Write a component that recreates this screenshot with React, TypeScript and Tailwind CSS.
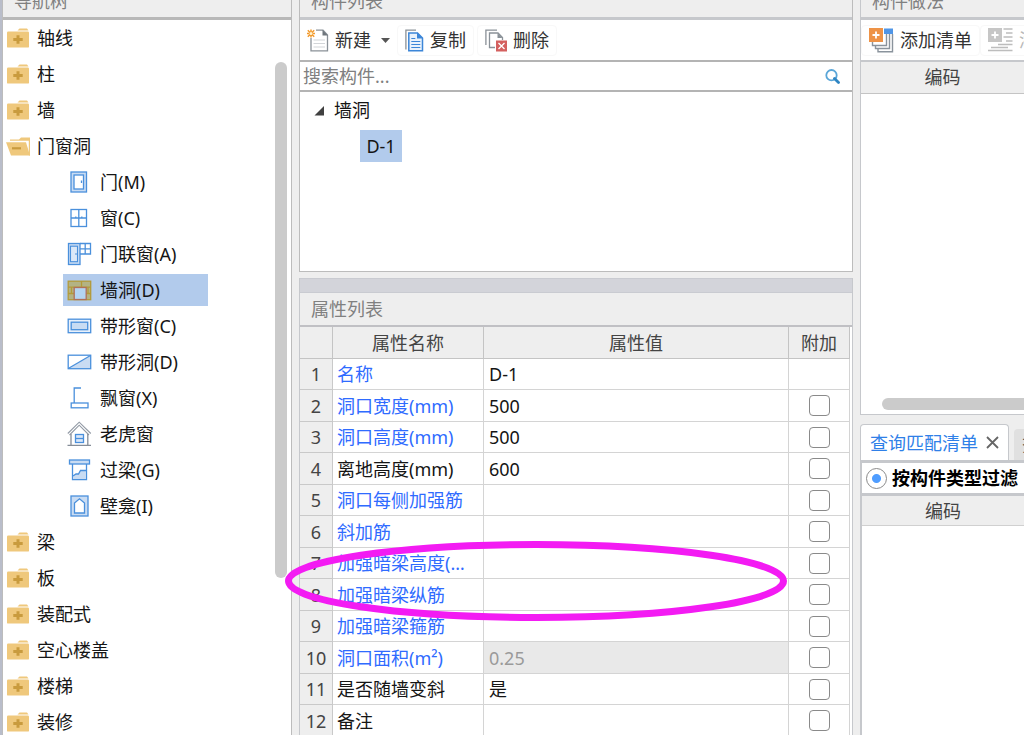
import type { ReactNode } from 'react'

const BLUE = '#4a90dc'
const PALE = '#c9dcf3'

const FolderClosed = () => (
  <svg width="22" height="20" viewBox="0 0 22 20" aria-hidden="true">
    <path d="M10.5 2.4L12.5 0.4H20L21.5 2.4z" fill="#efc87c" />
    <rect x="0" y="3.4" width="22" height="16.2" rx="1.2" fill="#efc87c" />
    <path d="M9.5 7.2h3v2.8h3.2v3h-3.2v2.8h-3V13H6.300v-3h3.200z" fill="#c99b3e" />
  </svg>
)

const FolderOpen = () => (
  <svg width="24" height="19" viewBox="0 0 24 19" aria-hidden="true">
    <path d="M4 3.800V2.400H13L15 0.600H24V18.400H22.800V3.800z" fill="#efc87c" />
    <path d="M0 5.200H20L24 18.400H5z" fill="#efc87c" />
    <path d="M6 10.200h9v2.200h-9z" fill="#c99b3e" />
  </svg>
)

const DoorIcon = () => (
  <svg width="25" height="24" viewBox="0 0 25 24" aria-hidden="true">
    <rect x="4" y="2" width="15.500" height="20" fill={PALE} stroke={BLUE} strokeWidth="1.300" />
    <rect x="7" y="5" width="9.500" height="14" fill="#fff" stroke={BLUE} strokeWidth="1.300" />
    <path d="M14.500 10.500v2.500" stroke={BLUE} strokeWidth="1.300" />
  </svg>
)

const WindowIcon = () => (
  <svg width="25" height="24" viewBox="0 0 25 24" aria-hidden="true">
    <rect x="4" y="3.500" width="15.500" height="17" fill="#fff" stroke={BLUE} strokeWidth="1.300" />
    <path d="M4 12h15.500M11.800 3.500v17M8.800 10.500v1.500M14.800 10.500v1.500" stroke={BLUE} strokeWidth="1.300" />
  </svg>
)

const DoorWindowIcon = () => (
  <svg width="25" height="24" viewBox="0 0 25 24" aria-hidden="true">
    <rect x="1.500" y="1.500" width="11.500" height="21" fill={PALE} stroke={BLUE} strokeWidth="1.300" />
    <rect x="3.500" y="4.200" width="7" height="15.500" fill="#dbe8f8" stroke={BLUE} strokeWidth="1.100" />
    <path d="M9 11v2" stroke={BLUE} />
    <path d="M13 1.500h10.500v10.500H13M13 6.800h10.500M18.200 1.500v10.500" fill="none" stroke={BLUE} strokeWidth="1.300" />
  </svg>
)

const WallHoleIcon = () => (
  <svg width="25" height="24" viewBox="0 0 25 24" aria-hidden="true">
    <rect x="1.200" y="3.200" width="22.500" height="18.500" fill="#b3b384" stroke="#b39a3a" strokeWidth="1.300" />
    <path d="M1 9.200h22.500M1 15.500h6M18 15.500h6M14.500 3.200v6M4.500 9.200v6.300M21 9.200v6.300" stroke="#b39a3a" strokeWidth="1.300" />
    <rect x="7.200" y="9.500" width="12" height="12" fill="#b4d4f3" stroke="#b0705a" strokeWidth="1.300" />
  </svg>
)

const StripWindowIcon = () => (
  <svg width="25" height="24" viewBox="0 0 25 24" aria-hidden="true">
    <rect x="1.200" y="5.200" width="22.500" height="13.500" fill="#e9f1fb" stroke={BLUE} strokeWidth="1.300" />
    <rect x="4.200" y="8.200" width="16.500" height="7.500" fill={PALE} stroke={BLUE} strokeWidth="1.300" />
  </svg>
)

const StripHoleIcon = () => (
  <svg width="25" height="24" viewBox="0 0 25 24" aria-hidden="true">
    <path d="M1.500 18.500L23.500 5.500V18.500z" fill={PALE} />
    <path d="M1.200 18.500L23.500 5.500" stroke={BLUE} strokeWidth="1.300" />
    <rect x="1.200" y="5.200" width="22.500" height="13.500" fill="none" stroke={BLUE} strokeWidth="1.300" />
  </svg>
)

const BayWindowIcon = () => (
  <svg width="25" height="24" viewBox="0 0 25 24" aria-hidden="true">
    <path d="M14 2H7.200V17" fill="none" stroke={BLUE} strokeWidth="1.300" />
    <rect x="4.200" y="17" width="16.800" height="4.800" fill="#fff" stroke={BLUE} strokeWidth="1.300" />
  </svg>
)

const DormerIcon = () => (
  <svg width="25" height="26" viewBox="0 0 25 26" aria-hidden="true">
    <path d="M0.800 12.500L12.200 1.200L23.800 12.500M2.500 14L12.200 4.200L22 14" fill="none" stroke="#929aa5" strokeWidth="1.100" />
    <path d="M4 13v11M20.800 13v11M0.500 24.300h23.500" stroke="#858d98" strokeWidth="1.300" />
    <rect x="8.500" y="13.500" width="8" height="8" fill="#dbe8f8" stroke={BLUE} strokeWidth="1.300" />
    <path d="M8.500 17.500h8" stroke={BLUE} strokeWidth="1.300" />
  </svg>
)

const LintelIcon = () => (
  <svg width="25" height="24" viewBox="0 0 25 24" aria-hidden="true">
    <path d="M5.500 6v15.500H19.500V6" fill="#fff" stroke={BLUE} strokeWidth="1.300" />
    <path d="M6 18.500l3-2.500h2.500l2-3.500h5.500v8.500H6z" fill={PALE} />
    <path d="M6 18l3-2h2.500l2-3.500h5.500" fill="none" stroke={BLUE} strokeWidth="1.300" />
    <rect x="2.500" y="2" width="20" height="4" fill={PALE} stroke={BLUE} strokeWidth="1.300" />
  </svg>
)

const NicheIcon = () => (
  <svg width="25" height="24" viewBox="0 0 25 24" aria-hidden="true">
    <rect x="4" y="2" width="17" height="20" fill={PALE} stroke={BLUE} strokeWidth="1.300" />
    <path d="M7.500 19V9L12.500 4.800L17.500 9V19z" fill="#fff" stroke={BLUE} strokeWidth="1.300" />
  </svg>
)

const NewIcon = () => (
  <svg width="22" height="23" viewBox="0 0 22 23" aria-hidden="true">
    <path d="M4 9v12.800H20.500V6L16 1.200H9" fill="#fff" stroke="#8a9198" strokeWidth="1.300" />
    <path d="M15.500 1v5.500h5.500z" fill="#6f767d" />
    <path d="M6.500 11h11.500M6.500 14.500h11.500M6.500 18h11.500" stroke="#d2d5d8" />
    <path d="M4 0.500v8M0 4.500h8M0.800 1.300l6.400 6.400M7.200 1.300L0.800 7.700" stroke="#f29a2e" strokeWidth="1.500" />
    <circle cx="4" cy="4.500" r="1.500" fill="#fff3d0" />
  </svg>
)

const CopyIcon = () => (
  <svg width="19" height="23" viewBox="0 0 19 23" aria-hidden="true">
    <path d="M11 1.200H0.900V20.500" fill="none" stroke="#8a9198" strokeWidth="1.300" />
    <path d="M3.800 4H12.500L17.500 9V21.800H3.800z" fill="#e9f2fc" stroke="#3c86d8" strokeWidth="1.500" />
    <path d="M12 3.500V9.500h6z" fill="#3c86d8" />
    <path d="M6.300 9.500h4M6.300 12.500h9M6.300 15.500h9M6.300 18.500h9" stroke="#3c86d8" strokeWidth="1.200" />
  </svg>
)

const DeleteIcon = () => (
  <svg width="22" height="23" viewBox="0 0 22 23" aria-hidden="true">
    <path d="M12 1.200H0.900V16" fill="none" stroke="#8a9198" strokeWidth="1.300" />
    <path d="M10 18.500H4.500V4H13L17.500 8.500V11" fill="none" stroke="#8a9198" strokeWidth="1.300" />
    <path d="M12.500 4v5h5z" fill="#8a9198" />
    <rect x="11" y="11.500" width="11" height="11" fill="#d4605f" />
    <path d="M13.500 14l6 6M19.500 14l-6 6" stroke="#fff" strokeWidth="1.300" />
  </svg>
)

const AddListIcon = () => (
  <svg width="25" height="25" viewBox="0 0 25 25" aria-hidden="true">
    <path d="M9 21v2.800H23.500V6" fill="none" stroke="#8a939c" strokeWidth="1.400" />
    <path d="M6.500 18v2.500H20.500V6" fill="none" stroke="#8a939c" strokeWidth="1.400" />
    <path d="M3.500 14v3.500H17.500V6" fill="none" stroke="#8a939c" strokeWidth="1.400" />
    <rect x="15" y="0.500" width="9" height="5.500" fill="#4f95e6" />
    <rect x="0" y="0" width="14" height="14" fill="#ee9347" />
    <path d="M7 3.500v7M3.500 7h7" stroke="#fff" strokeWidth="1.800" />
  </svg>
)

const AddQuotaIcon = () => (
  <svg width="25" height="25" viewBox="0 0 25 25" aria-hidden="true">
    <rect x="0" y="0" width="14" height="14" fill="#c6c6c6" />
    <path d="M7 3.500v7M3.500 7h7" stroke="#fff" strokeWidth="1.800" />
    <path d="M15.500 1h9M18 5h6.500M15.500 9h9M18 13h6.500M10 16.500h14.500M3 19.500h17M0 22.500h24.500" stroke="#bdbdbd" strokeWidth="1.300" />
  </svg>
)

const SearchIcon = () => (
  <svg width="15" height="15" viewBox="0 0 15 15" aria-hidden="true">
    <circle cx="6.500" cy="6.200" r="5.200" fill="#fff" stroke="#5aa6d8" strokeWidth="1.800" />
    <path d="M9.500 9.500l4 4" stroke="#2f86c4" strokeWidth="2.800" strokeLinecap="round" />
  </svg>
)

type TreeNode = {
  name: string
  selected?: boolean
  icon?: ReactNode
  children?: TreeNode[]
}

const navTree: TreeNode[] = [
  { name: '轴线' },
  { name: '柱' },
  { name: '墙' },
  {
    name: '门窗洞',
    children: [
      { name: '门(M)', icon: <DoorIcon /> },
      { name: '窗(C)', icon: <WindowIcon /> },
      { name: '门联窗(A)', icon: <DoorWindowIcon /> },
      { name: '墙洞(D)', icon: <WallHoleIcon />, selected: true },
      { name: '带形窗(C)', icon: <StripWindowIcon /> },
      { name: '带形洞(D)', icon: <StripHoleIcon /> },
      { name: '飘窗(X)', icon: <BayWindowIcon /> },
      { name: '老虎窗', icon: <DormerIcon /> },
      { name: '过梁(G)', icon: <LintelIcon /> },
      { name: '壁龛(I)', icon: <NicheIcon /> },
    ],
  },
  { name: '梁' },
  { name: '板' },
  { name: '装配式' },
  { name: '空心楼盖' },
  { name: '楼梯' },
  { name: '装修' },
]

type Property = {
  name: string
  value?: string
  plain?: boolean
  readOnly?: boolean
  noCheck?: boolean
}

const properties: Property[] = [
  { name: '名称', value: 'D-1', noCheck: true },
  { name: '洞口宽度(mm)', value: '500' },
  { name: '洞口高度(mm)', value: '500' },
  { name: '离地高度(mm)', value: '600', plain: true },
  { name: '洞口每侧加强筋' },
  { name: '斜加筋' },
  { name: '加强暗梁高度(mm)' },
  { name: '加强暗梁纵筋' },
  { name: '加强暗梁箍筋' },
  { name: '洞口面积(m²)', value: '0.25', readOnly: true },
  { name: '是否随墙变斜', value: '是', plain: true },
  { name: '备注', plain: true },
]

const PanelTitle = ({ children }: { children: ReactNode }) => (
  <h2 className="h-8 shrink-0 bg-[#eeeeee] pl-[11px] leading-8 text-[#808080]">{children}</h2>
)

const ToolButton = ({ icon, label, disabled }: { icon: ReactNode; label: string; disabled?: boolean }) => (
  <button
    type="button"
    disabled={disabled}
    className="flex h-[31px] shrink-0 items-center gap-[6px] whitespace-nowrap rounded border border-[#f8f8f8] px-[7px] text-[#333333] disabled:text-[#b8b8b8]"
  >
    {icon}
    {label}
  </button>
)

const NavPanel = () => (
  <nav className="flex flex-col overflow-hidden border border-b-0 border-[#bcbcbc] bg-white">
    <PanelTitle>导航树</PanelTitle>
    <div className="flex min-h-0 flex-1 border-t-3 border-[#b8b8b8]">
      <ul className="flex-1">
        {navTree.map((node) => (
          <li key={node.name}>
            <button type="button" className="flex h-9 w-full items-center pl-[3px]">
              <span className="flex w-[31px] shrink-0 justify-center pr-[7px]">
                {node.children ? <FolderOpen /> : <FolderClosed />}
              </span>
              {node.name}
            </button>
            {node.children && (
              <ul className="pl-[60px]">
                {node.children.map((child) => (
                  <li key={child.name} className="flex h-9 items-center">
                    <button
                      type="button"
                      className={`flex h-8 w-[145px] items-center gap-2 pl-1 ${child.selected ? 'bg-[#b2cbec]' : ''}`}
                    >
                      {child.icon}
                      {child.name}
                    </button>
                  </li>
                ))}
              </ul>
            )}
          </li>
        ))}
      </ul>
      <div className="w-4 pt-[42px]">
        <div className="h-[516px] w-3 rounded-full bg-[#cbcbcb]" />
      </div>
    </div>
  </nav>
)

const ComponentList = () => (
  <section className="flex flex-col border border-[#bcbcbc] bg-white">
    <PanelTitle>构件列表</PanelTitle>
    <div className="flex h-[43px] items-center gap-[3px] border-t-3 border-[#c6c8cc]">
      <button type="button" className="flex h-[31px] items-center gap-[6px] pl-[7px] pr-1 text-[#333333]">
        <NewIcon />
        新建
        <svg width="9" height="5" viewBox="0 0 9 5" className="ml-1" aria-hidden="true">
          <path d="M0 0H9L4.500 5z" fill="#555" />
        </svg>
      </button>
      <ToolButton icon={<CopyIcon />} label="复制" />
      <ToolButton icon={<DeleteIcon />} label="删除" />
    </div>
    <div className="flex h-8 items-center border-y-2 border-[#b4b4b4] pr-3">
      <input
        type="search"
        aria-label="搜索构件"
        placeholder="搜索构件..."
        className="h-7 min-w-0 flex-1 pl-[3px] outline-none placeholder:text-[#808080]"
      />
      <button type="button" aria-label="搜索">
        <SearchIcon />
      </button>
    </div>
    <ul className="h-[179px]">
      <li>
        <button type="button" className="flex h-9 items-center gap-[9px] pl-[14px]">
          <svg width="11" height="11" viewBox="0 0 11 11" aria-hidden="true">
            <path d="M0.500 10.500L10 1V10.500z" fill="#404040" />
          </svg>
          墙洞
        </button>
        <ul className="pl-[60px]">
          <li className="flex h-9 items-center">
            <button type="button" className="h-8 w-[42px] bg-[#b2cbec] text-center">D-1</button>
          </li>
        </ul>
      </li>
    </ul>
  </section>
)

const PropertyList = () => (
  <section className="flex min-h-0 flex-1 flex-col overflow-hidden border-x border-[#c6c8cc] bg-white">
    <div className="h-[15px] shrink-0 border-y border-[#c9cbd1] bg-[#d3d4da]" />
    <PanelTitle>属性列表</PanelTitle>
    <div className="border-t-2 border-[#c0c0c4] pr-[2px]">
      <table className="w-full table-fixed border-separate border-spacing-0">
        <colgroup>
          <col className="w-[33px]" />
          <col className="w-[151px]" />
          <col />
          <col className="w-[61px]" />
        </colgroup>
        <thead>
          <tr className="h-8 bg-[#eeeeee] text-[#444444]">
            <th className="border-b border-r border-[#c4c4c4]" aria-label="序号" />
            <th className="border-b border-r border-[#c4c4c4] font-normal">属性名称</th>
            <th className="border-b border-r border-[#c4c4c4] font-normal">属性值</th>
            <th className="border-b border-r border-[#c4c4c4] font-normal">附加</th>
          </tr>
        </thead>
        <tbody>
          {properties.map((p, i) => (
            <tr key={p.name} className="odd:h-[31px] even:h-8">
              <td className="border-b border-r border-[#c9c9c9] bg-[#eeeeee] text-center text-[#444444]">{i + 1}</td>
              <td className={`truncate border-b border-r border-[#d4d4d4] px-1 ${p.plain ? '' : 'text-[#2f6bff]'}`}>
                {p.name}
              </td>
              <td
                className={`border-b border-r border-[#d4d4d4] px-[5px] ${p.readOnly ? 'bg-[#e9e9e9] text-[#9a9a9a]' : ''}`}
              >
                {p.value}
              </td>
              <td className="border-b border-r border-[#d4d4d4]">
                {!p.noCheck && (
                  <input
                    type="checkbox"
                    aria-label={`附加 ${p.name}`}
                    className="mx-auto block size-[21px] appearance-none rounded-[4px] border border-[#8a8a8a] bg-white checked:bg-[#4a90dc]"
                  />
                )}
              </td>
            </tr>
          ))}
        </tbody>
      </table>
    </div>
  </section>
)

const MethodPanel = () => (
  <section className="flex h-[431px] shrink-0 flex-col overflow-hidden border border-r-0 border-[#c6c8cc] bg-white">
    <PanelTitle>构件做法</PanelTitle>
    <div className="flex h-[45px] shrink-0 items-center border-b-2 border-t-3 border-[#c6c8cc]">
      <ToolButton icon={<AddListIcon />} label="添加清单" />
      <ToolButton icon={<AddQuotaIcon />} label="添加定额" disabled />
    </div>
    <table className="w-full">
      <thead>
        <tr className="h-[31px] border-b border-[#c4c4c4] bg-[#eeeeee] text-[#444444]">
          <th className="font-normal">编码</th>
        </tr>
      </thead>
    </table>
    <div className="mb-1 ml-[21px] mt-auto h-3 shrink-0 rounded-l-full bg-[#cbcbcb]" />
  </section>
)

const QueryPanel = () => (
  <section className="flex min-h-0 flex-1 flex-col overflow-hidden">
    <div className="flex h-9 shrink-0 items-end gap-[5px]">
      <div className="flex h-full shrink-0 items-center gap-2 rounded-t border border-b-0 border-[#c6c8cc] bg-white px-[9px]">
        <button type="button" className="whitespace-nowrap text-[#2f80e8]">查询匹配清单</button>
        <button type="button" aria-label="关闭">
          <svg width="13" height="13" viewBox="0 0 13 13" aria-hidden="true">
            <path d="M1 1l11 11M12 1L1 12" stroke="#666" strokeWidth="1.800" />
          </svg>
        </button>
      </div>
      <button
        type="button"
        className="h-[31px] shrink-0 whitespace-nowrap rounded-t bg-[#e0e0e0] px-2 text-[#555555]"
      >
        查询匹配定额
      </button>
    </div>
    <div className="flex-1 border-l-2 border-t-3 border-[#c6c8cc] bg-white">
      <label className="flex h-[30px] items-center gap-[5px] whitespace-nowrap pl-1 font-bold text-black">
        <input
          type="radio"
          name="filter"
          defaultChecked
          className="size-[21px] shrink-0 appearance-none rounded-full border border-[#8a8a8a] bg-white checked:bg-[radial-gradient(circle,#4f9dff_4px,white_5px)]"
        />
        按构件类型过滤
      </label>
      <table className="w-full border-t-3 border-[#c6c8cc]">
        <thead>
          <tr className="h-[31px] border-b border-[#d0d0d0] bg-[#eeeeee] text-[#444444]">
            <th className="font-normal">编码</th>
          </tr>
        </thead>
      </table>
    </div>
  </section>
)

const App = () => {
  return (
    <div className="relative h-screen overflow-hidden bg-[#eeeeee] font-['Noto_Sans','Noto_Sans_CJK_SC',sans-serif] text-[18px] leading-6 text-[#151515]">
      <div className="-mt-4 grid h-[calc(100vh+16px)] grid-cols-[290px_minmax(0,1fr)_164px] gap-[7px] border-l-2 border-[#b9bdca]">
        <NavPanel />
        <div className="flex min-h-0 flex-col gap-[6px]">
          <ComponentList />
          <PropertyList />
        </div>
        <div className="flex min-h-0 flex-col gap-[9px]">
          <MethodPanel />
          <QueryPanel />
        </div>
      </div>

      {/* highlight ring over the hidden beam rows */}
      <svg
        className="pointer-events-none absolute left-[285px] top-[541px]"
        width="502"
        height="80"
        viewBox="0 0 502 80"
        aria-hidden="true"
      >
        <ellipse cx="251" cy="40" rx="247.500" ry="36.500" fill="none" stroke="#f31bf3" strokeWidth="7" />
      </svg>
    </div>
  )
}

export default App
